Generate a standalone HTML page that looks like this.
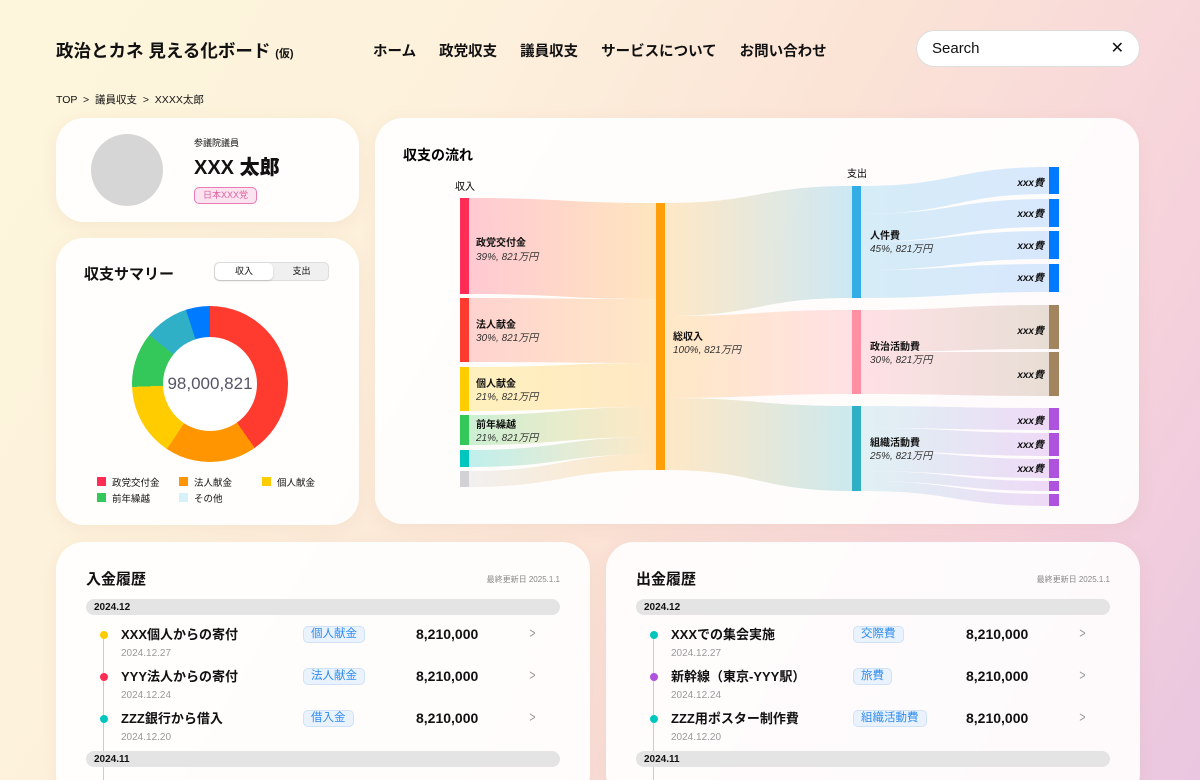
<!DOCTYPE html>
<html style="width:1200px;height:780px;overflow:hidden"><head><meta charset="utf-8"><style>
*{box-sizing:border-box;margin:0;padding:0}
html,body{background:linear-gradient(120deg,#fdf6dc 0%,#fdf1dc 30%,#fbe3d6 55%,#f6d2dc 80%,#eac6e0 100%)}
body{width:1200px;height:780px;overflow:hidden;font-family:"Liberation Sans","Noto Sans CJK JP",sans-serif;color:#111;position:relative}
.abs{position:absolute}
.card{position:absolute;background:rgba(255,255,255,0.9);border-radius:28px;box-shadow:0 4px 16px rgba(200,150,120,0.12);overflow:hidden}
.nav span{margin-right:23px}
.b{font-weight:bold}
.row{position:absolute;left:0;width:100%;height:42px}
.dot{position:absolute;left:44px;top:8px;width:8px;height:8px;border-radius:50%}
.tt{position:absolute;left:65px;top:5px;font-size:13px;line-height:14px;font-weight:bold;white-space:nowrap}
.dt{position:absolute;left:65px;top:25px;font-size:10px;line-height:11px;color:#999}
.tag{position:absolute;top:3px;height:17px;padding:0 7px;font-size:11.5px;line-height:15px;color:#2f8cf0;background:#eaf3fd;border:1px solid #cfe2f8;border-radius:5px}
.amt{position:absolute;left:360px;top:4px;font-size:14px;line-height:15px;font-weight:bold}
.chev{position:absolute;left:472px;top:3px;font-size:15px;line-height:16px;color:#999;transform:scaleX(.7)}
.mbar{position:absolute;left:30px;width:474px;height:16px;background:#e4e4e4;border-radius:8px;font-size:10px;font-weight:bold;padding-left:8px;display:flex;align-items:center}
.sl{font-size:10px;font-weight:bold;fill:#111}
.si{font-size:10px;font-style:italic;fill:#333}
</style></head><body>
<div class="abs b" style="left:56px;top:38px;font-size:17.5px;white-space:nowrap">政治とカネ 見える化ボード <span style="font-size:11px">(仮)</span></div>
<div class="abs nav b" style="left:373px;top:40px;font-size:14.5px;white-space:nowrap"><span>ホーム</span><span>政党収支</span><span>議員収支</span><span>サービスについて</span><span style="margin:0">お問い合わせ</span></div>
<div class="abs" style="left:916px;top:30px;width:224px;height:37px;background:#fff;border-radius:19px;border:1px solid #ddd;font-size:15px;padding:9px 0 0 15px">Search<span style="position:absolute;right:15px;top:7px;font-size:16px">✕</span></div>
<div class="abs" style="left:56px;top:92px;font-size:10.5px">TOP &nbsp;&gt;&nbsp; 議員収支 &nbsp;&gt;&nbsp; XXXX太郎</div>

<div class="card" style="left:56px;top:118px;width:303px;height:104px">
<div class="abs" style="left:35px;top:16px;width:72px;height:72px;border-radius:50%;background:#d6d6d6"></div>
<div class="abs" style="left:138px;top:18px;font-size:9px">参議院議員</div>
<div class="abs" style="left:138px;top:38px;font-size:20px;font-weight:900;line-height:24px">XXX 太郎</div>
<div class="abs" style="left:138px;top:69px;width:63px;height:17px;border:1px solid #e97ab6;background:#fbe3f0;border-radius:5px;font-size:9px;color:#e060a0;text-align:center;line-height:15px">日本XXX党</div>
</div>

<div class="card" style="left:56px;top:238px;width:303px;height:287px">
<div class="abs b" style="left:28px;top:25px;font-size:15px">収支サマリー</div>
<div class="abs" style="left:158px;top:24px;width:115px;height:19px;background:#f0f0f0;border-radius:5px;border:1px solid #ddd;font-size:9px">
<div class="abs" style="left:0;top:0;width:58px;height:17px;background:#fff;border-radius:5px;text-align:center;line-height:17px;box-shadow:0 1px 2px rgba(0,0,0,.15)">収入</div>
<div class="abs" style="left:58px;top:0;width:57px;text-align:center;line-height:17px">支出</div></div>
<div class="abs" style="left:76px;top:68px;width:156px;height:156px;border-radius:50%;background:conic-gradient(#ff3b30 0 40.3%,#ff9500 40.3% 59.3%,#ffcc00 59.3% 74.4%,#34c759 74.4% 85.8%,#30b0c7 85.8% 95%,#007aff 95% 100%)"></div>
<div class="abs" style="left:107px;top:99px;width:94px;height:94px;border-radius:50%;background:#fff;text-align:center;line-height:94px;font-size:17px;color:#556">98,000,821</div>
<div class="abs" style="left:41px;top:238px;font-size:9.5px;line-height:16px;width:240px">
<div class="abs" style="left:0;top:0;white-space:nowrap"><span style="display:inline-block;width:9px;height:9px;background:#ff2d55;margin-right:6px"></span>政党交付金</div>
<div class="abs" style="left:82px;top:0;white-space:nowrap"><span style="display:inline-block;width:9px;height:9px;background:#ff9500;margin-right:6px"></span>法人献金</div>
<div class="abs" style="left:165px;top:0;white-space:nowrap"><span style="display:inline-block;width:9px;height:9px;background:#ffcc00;margin-right:6px"></span>個人献金</div>
<div class="abs" style="left:0;top:16px;white-space:nowrap"><span style="display:inline-block;width:9px;height:9px;background:#34c759;margin-right:6px"></span>前年繰越</div>
<div class="abs" style="left:82px;top:16px;white-space:nowrap"><span style="display:inline-block;width:9px;height:9px;background:#d6f1f8;margin-right:6px"></span>その他</div>
</div></div>

<div class="card" style="left:375px;top:118px;width:764px;height:406px"></div>
<svg class="abs" style="left:0;top:0" width="1200" height="780">
<defs>
<linearGradient id="g1"><stop offset="0" stop-color="#ff2d55" stop-opacity=".25"/><stop offset="1" stop-color="#ff9f0a" stop-opacity=".25"/></linearGradient>
<linearGradient id="g2"><stop offset="0" stop-color="#ff3b30" stop-opacity=".22"/><stop offset="1" stop-color="#ff9f0a" stop-opacity=".22"/></linearGradient>
<linearGradient id="g3"><stop offset="0" stop-color="#ffcc00" stop-opacity=".25"/><stop offset="1" stop-color="#ff9f0a" stop-opacity=".22"/></linearGradient>
<linearGradient id="g4"><stop offset="0" stop-color="#34c759" stop-opacity=".25"/><stop offset="1" stop-color="#ff9f0a" stop-opacity=".22"/></linearGradient>
<linearGradient id="g5"><stop offset="0" stop-color="#00c7be" stop-opacity=".25"/><stop offset="1" stop-color="#ff9f0a" stop-opacity=".22"/></linearGradient>
<linearGradient id="g6"><stop offset="0" stop-color="#c7c7cc" stop-opacity=".25"/><stop offset="1" stop-color="#ff9f0a" stop-opacity=".22"/></linearGradient>
<linearGradient id="ga"><stop offset="0" stop-color="#ff9f0a" stop-opacity=".22"/><stop offset="1" stop-color="#32ade6" stop-opacity=".25"/></linearGradient>
<linearGradient id="gb"><stop offset="0" stop-color="#ff9f0a" stop-opacity=".22"/><stop offset="1" stop-color="#ff8fa3" stop-opacity=".25"/></linearGradient>
<linearGradient id="gc"><stop offset="0" stop-color="#ff9f0a" stop-opacity=".22"/><stop offset="1" stop-color="#30b0c7" stop-opacity=".25"/></linearGradient>
<linearGradient id="gd"><stop offset="0" stop-color="#32ade6" stop-opacity=".2"/><stop offset="1" stop-color="#007aff" stop-opacity=".15"/></linearGradient>
<linearGradient id="ge"><stop offset="0" stop-color="#ff8fa3" stop-opacity=".25"/><stop offset="1" stop-color="#a2845e" stop-opacity=".25"/></linearGradient>
<linearGradient id="gf"><stop offset="0" stop-color="#30b0c7" stop-opacity=".15"/><stop offset="1" stop-color="#af52de" stop-opacity=".2"/></linearGradient>
</defs>
<g>
<path fill="url(#g1)" d="M469,198C562,198 562,203 656,203L656,299C562,299 562,294 469,294Z"/>
<path fill="url(#g2)" d="M469,298C562,298 562,299 656,299L656,363C562,363 562,362 469,362Z"/>
<path fill="url(#g3)" d="M469,367C562,367 562,363 656,363L656,407C562,407 562,411 469,411Z"/>
<path fill="url(#g4)" d="M469,415C562,415 562,407 656,407L656,437C562,437 562,445 469,445Z"/>
<path fill="url(#g5)" d="M469,450C562,450 562,437 656,437L656,454C562,454 562,467 469,467Z"/>
<path fill="url(#g6)" d="M469,471C562,471 562,454 656,454L656,470C562,470 562,487 469,487Z"/>
<path fill="url(#ga)" d="M665,203C758,203 758,186 852,186L852,298C758,298 758,316 665,316Z"/>
<path fill="url(#gb)" d="M665,316C758,316 758,310 852,310L852,394C758,394 758,398 665,398Z"/>
<path fill="url(#gc)" d="M665,398C758,398 758,406 852,406L852,491C758,491 758,470 665,470Z"/>
<path fill="url(#gd)" d="M861,186C955,186 955,167 1049,167L1049,194C955,194 955,214 861,214Z"/>
<path fill="url(#gd)" d="M861,214C955,214 955,199 1049,199L1049,227C955,227 955,242 861,242Z"/>
<path fill="url(#gd)" d="M861,242C955,242 955,231 1049,231L1049,259C955,259 955,270 861,270Z"/>
<path fill="url(#gd)" d="M861,270C955,270 955,264 1049,264L1049,292C955,292 955,298 861,298Z"/>
<path fill="url(#ge)" d="M861,310C955,310 955,305 1049,305L1049,349C955,349 955,352 861,352Z"/>
<path fill="url(#ge)" d="M861,352C955,352 955,352 1049,352L1049,396C955,396 955,394 861,394Z"/>
<path fill="url(#gf)" d="M861,406C955,406 955,408 1049,408L1049,430C955,430 955,428 861,428Z"/>
<path fill="url(#gf)" d="M861,428C955,428 955,433 1049,433L1049,456C955,456 955,451 861,451Z"/>
<path fill="url(#gf)" d="M861,451C955,451 955,459 1049,459L1049,478C955,478 955,471 861,471Z"/>
<path fill="url(#gf)" d="M861,471C955,471 955,481 1049,481L1049,491C955,491 955,481 861,481Z"/>
<path fill="url(#gf)" d="M861,481C955,481 955,494 1049,494L1049,506C955,506 955,491 861,491Z"/>
</g>
<rect x="460" y="198" width="9" height="96" fill="#ff2d55"/>
<rect x="460" y="298" width="9" height="64" fill="#ff3b30"/>
<rect x="460" y="367" width="9" height="44" fill="#ffcc00"/>
<rect x="460" y="415" width="9" height="30" fill="#34c759"/>
<rect x="460" y="450" width="9" height="17" fill="#00c7be"/>
<rect x="460" y="471" width="9" height="16" fill="#d1d1d6"/>
<rect x="656" y="203" width="9" height="267" fill="#ff9f0a"/>
<rect x="852" y="186" width="9" height="112" fill="#32ade6"/>
<rect x="852" y="310" width="9" height="84" fill="#ff8fa3"/>
<rect x="852" y="406" width="9" height="85" fill="#30b0c7"/>
<g fill="#007aff"><rect x="1049" y="167" width="10" height="27"/><rect x="1049" y="199" width="10" height="28"/><rect x="1049" y="231" width="10" height="28"/><rect x="1049" y="264" width="10" height="28"/></g>
<g fill="#a2845e"><rect x="1049" y="305" width="10" height="44"/><rect x="1049" y="352" width="10" height="44"/></g>
<g fill="#af52de"><rect x="1049" y="408" width="10" height="22"/><rect x="1049" y="433" width="10" height="23"/><rect x="1049" y="459" width="10" height="19"/><rect x="1049" y="481" width="10" height="10"/><rect x="1049" y="494" width="10" height="12"/></g>
<text x="403" y="160" style="font-size:14px;font-weight:bold">収支の流れ</text>
<text x="455" y="190" style="font-size:10px">収入</text>
<text x="847" y="177" style="font-size:10px">支出</text>
<text x="476" y="246" class="sl">政党交付金</text><text x="476" y="260" class="si">39%, 821万円</text>
<text x="476" y="328" class="sl">法人献金</text><text x="476" y="341" class="si">30%, 821万円</text>
<text x="476" y="387" class="sl">個人献金</text><text x="476" y="400" class="si">21%, 821万円</text>
<text x="476" y="428" class="sl">前年繰越</text><text x="476" y="441" class="si">21%, 821万円</text>
<text x="673" y="340" class="sl">総収入</text><text x="673" y="353" class="si">100%, 821万円</text>
<text x="870" y="239" class="sl">人件費</text><text x="870" y="252" class="si">45%, 821万円</text>
<text x="870" y="350" class="sl">政治活動費</text><text x="870" y="363" class="si">30%, 821万円</text>
<text x="870" y="446" class="sl">組織活動費</text><text x="870" y="459" class="si">25%, 821万円</text>
<g class="sl" style="font-style:italic" text-anchor="end">
<text x="1044" y="186">xxx費</text><text x="1044" y="217">xxx費</text><text x="1044" y="249">xxx費</text><text x="1044" y="281">xxx費</text>
<text x="1044" y="334">xxx費</text><text x="1044" y="378">xxx費</text>
<text x="1044" y="424">xxx費</text><text x="1044" y="448">xxx費</text><text x="1044" y="472">xxx費</text></g>
</svg>

<div class="card" style="left:56px;top:542px;width:534px;height:260px">
<div class="abs b" style="left:30px;top:26px;font-size:15px">入金履歴</div>
<div class="abs" style="right:30px;top:32px;font-size:8px;color:#888">最終更新日 2025.1.1</div>
<div class="abs" style="left:47px;top:90px;width:1px;height:150px;background:#ccc"></div>
<div class="mbar" style="top:57px">2024.12</div>
<div class="row" style="top:81px"><div class="dot" style="background:#ffcc00"></div><div class="tt">XXX個人からの寄付</div><div class="dt">2024.12.27</div><div class="tag" style="left:247px">個人献金</div><div class="amt">8,210,000</div><div class="chev">&gt;</div></div>
<div class="row" style="top:123px"><div class="dot" style="background:#ff2d55"></div><div class="tt">YYY法人からの寄付</div><div class="dt">2024.12.24</div><div class="tag" style="left:247px">法人献金</div><div class="amt">8,210,000</div><div class="chev">&gt;</div></div>
<div class="row" style="top:165px"><div class="dot" style="background:#00c7be"></div><div class="tt">ZZZ銀行から借入</div><div class="dt">2024.12.20</div><div class="tag" style="left:247px">借入金</div><div class="amt">8,210,000</div><div class="chev">&gt;</div></div>
<div class="mbar" style="top:209px">2024.11</div>
</div>

<div class="card" style="left:606px;top:542px;width:534px;height:260px">
<div class="abs b" style="left:30px;top:26px;font-size:15px">出金履歴</div>
<div class="abs" style="right:30px;top:32px;font-size:8px;color:#888">最終更新日 2025.1.1</div>
<div class="abs" style="left:47px;top:90px;width:1px;height:150px;background:#ccc"></div>
<div class="mbar" style="top:57px">2024.12</div>
<div class="row" style="top:81px"><div class="dot" style="background:#00c7be"></div><div class="tt">XXXでの集会実施</div><div class="dt">2024.12.27</div><div class="tag" style="left:247px">交際費</div><div class="amt">8,210,000</div><div class="chev">&gt;</div></div>
<div class="row" style="top:123px"><div class="dot" style="background:#af52de"></div><div class="tt">新幹線（東京-YYY駅）</div><div class="dt">2024.12.24</div><div class="tag" style="left:247px">旅費</div><div class="amt">8,210,000</div><div class="chev">&gt;</div></div>
<div class="row" style="top:165px"><div class="dot" style="background:#00c7be"></div><div class="tt">ZZZ用ポスター制作費</div><div class="dt">2024.12.20</div><div class="tag" style="left:247px">組織活動費</div><div class="amt">8,210,000</div><div class="chev">&gt;</div></div>
<div class="mbar" style="top:209px">2024.11</div>
</div>
</body></html>
